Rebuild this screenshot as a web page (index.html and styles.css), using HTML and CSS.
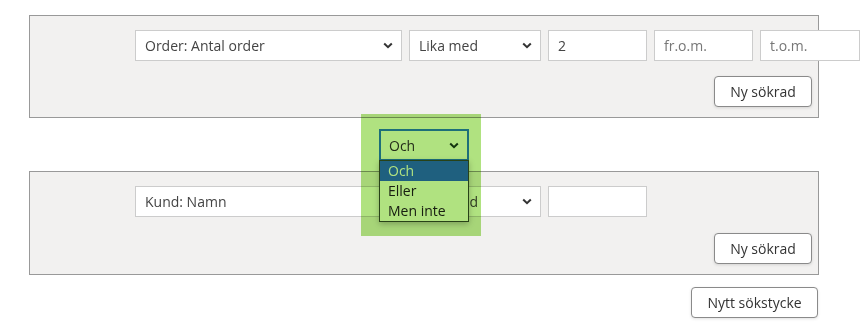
FILE: index.html
```html
<!DOCTYPE html>
<html lang="sv">
<head>
<meta charset="utf-8">
<title>Sökning</title>
<link rel="stylesheet" href="styles.css">
</head>
<body>
<div class="page">
  <section class="panel">
    <div class="row">
      <div class="field select w-main"><span>Order: Antal order</span><svg class="chev" viewBox="0 0 10 7"><polyline points="1.2,1.5 5,5.2 8.8,1.5"/></svg></div>
      <div class="field select w-op"><span>Lika med</span><svg class="chev" viewBox="0 0 10 7"><polyline points="1.2,1.5 5,5.2 8.8,1.5"/></svg></div>
      <div class="field w-val"><span>2</span></div>
      <div class="field w-val placeholder"><span>fr.o.m.</span></div>
      <div class="field w-last placeholder"><span>t.o.m.</span></div>
    </div>
    <div class="actions"><button class="btn">Ny sökrad</button></div>
  </section>

  <div class="connector">
    <div class="join-select"><span>Och</span><svg class="chev dark" viewBox="0 0 10 7"><polyline points="1.2,1.5 5,5.2 8.8,1.5"/></svg></div>
  </div>

  <section class="panel">
    <div class="row">
      <div class="field w-main"><span>Kund: Namn</span></div>
      <div class="field select w-op"><span>Lika med</span><svg class="chev" viewBox="0 0 10 7"><polyline points="1.2,1.5 5,5.2 8.8,1.5"/></svg></div>
      <div class="field w-val"><span></span></div>
    </div>
    <div class="actions second"><button class="btn">Ny sökrad</button></div>
  </section>

  <div class="footer"><button class="btn wide">Nytt sökstycke</button></div>

  <ul class="dropdown">
    <li class="opt active">Och</li>
    <li class="opt">Eller</li>
    <li class="opt">Men inte</li>
  </ul>
  <div class="highlight"></div>
</div>
</body>
</html>
```

FILE: styles.css
```css
* { box-sizing: border-box; }
html, body { margin: 0; padding: 0; background: #fff; }
body {
  font-family: "Open Sans", "Noto Sans", sans-serif;
  font-size: 14px;
  color: #444;
  width: 860px;
  height: 323px;
  overflow: hidden;
}
.page {
  position: relative;
  padding: 15px 0 0 29px;
}
.panel {
  width: 790px;
  background: #f2f1f0;
  border: 1px solid #999;
  padding: 14px 6px 10px 105px;
}
.row {
  display: flex;
  gap: 7px;
  height: 31px;
  flex-wrap: nowrap;
}
.field {
  flex: none;
  height: 31px;
  background: #fff;
  border: 1px solid #ccc;
  display: flex;
  align-items: center;
  justify-content: space-between;
  padding: 0 8px 0 9px;
  line-height: 1;
  color: #444;
}
.field span { white-space: nowrap; }
.placeholder { color: #777; }
.w-main { width: 267px; }
.w-op { width: 132px; }
.w-val { width: 99px; }
.w-last { width: 100px; }
.chev {
  width: 10px;
  height: 7px;
  fill: none;
  stroke: #333;
  stroke-width: 2;
}
.chev.dark { stroke: #1b3b1b; }
.actions {
  display: flex;
  justify-content: flex-end;
  margin-top: 15px;
}
.actions.second { margin-top: 16px; }
.btn {
  font-family: "Open Sans", "Noto Sans", sans-serif;
  font-size: 14px;
  color: #333;
  background: #fff;
  border: 1px solid #8a8a8a;
  border-radius: 4px;
  height: 31px;
  width: 98px;
  padding: 0;
  box-shadow: 0 1px 3px rgba(0,0,0,0.12);
}
.btn.wide { width: 127px; height: 31px; }
.connector {
  height: 53px;
  padding: 11px 0 0 350px;
}
.join-select {
  width: 90px;
  height: 32px;
  background: #fff;
  border: 2px solid #2a7df2;
  display: flex;
  align-items: center;
  justify-content: space-between;
  padding: 0 8px 0 8px;
  color: #333;
}
.footer {
  width: 790px;
  display: flex;
  justify-content: flex-end;
  padding-right: 1px;
  margin-top: 12px;
}
.dropdown {
  position: absolute;
  left: 379px;
  top: 160px;
  width: 90px;
  height: 62px;
  margin: 0;
  padding: 0;
  list-style: none;
  background: #fff;
  border: 1px solid #3a4a30;
  box-shadow: 0 2px 6px rgba(0,0,0,0.25);
}
.opt {
  height: 20px;
  line-height: 20px;
  padding-left: 8px;
  color: #222;
}
.opt.active {
  background: #2c6cfe;
  color: #fff;
}
.highlight {
  position: absolute;
  left: 361px;
  top: 114px;
  width: 120px;
  height: 122px;
  background: #b0e280;
  mix-blend-mode: multiply;
  pointer-events: none;
}
```
